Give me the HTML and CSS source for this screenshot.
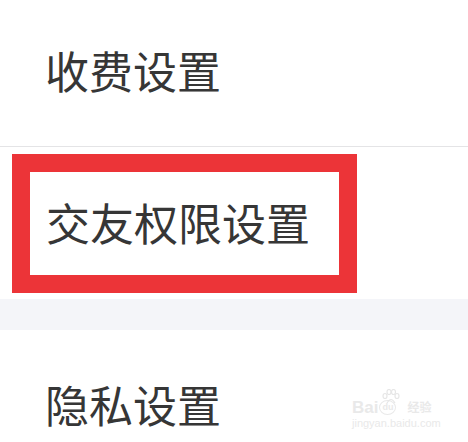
FILE: index.html
```html
<!DOCTYPE html>
<html>
<head>
  <title>设置</title>
  <link rel="stylesheet" href="styles.css">
</head>
<body>
  <div class="row row-first">
    <span class="label">收费设置</span>
  </div>

  <div class="section">
    <div class="highlight">
      <span class="label">交友权限设置</span>
    </div>
  </div>

  <div class="band"></div>

  <div class="row row-last">
    <span class="label">隐私设置</span>
  </div>

  <div class="watermark">
    <svg class="paw" width="18" height="15" viewBox="0 0 18 15">
      <ellipse cx="3" cy="7" rx="2" ry="2.5" fill="none" stroke="#e6e6e6" stroke-width="1.2"/>
      <ellipse cx="7" cy="3" rx="2" ry="2.5" fill="none" stroke="#e6e6e6" stroke-width="1.2"/>
      <ellipse cx="11.5" cy="3" rx="2" ry="2.5" fill="none" stroke="#e6e6e6" stroke-width="1.2"/>
      <ellipse cx="15" cy="7" rx="2" ry="2.5" fill="none" stroke="#e6e6e6" stroke-width="1.2"/>
      <path d="M5 14 Q9 7 13 14" fill="none" stroke="#e6e6e6" stroke-width="1.2"/>
    </svg>
    <div class="wm-logo">
      <span class="wm-bai">Bai</span>
      <span class="wm-du">du</span>
      <span class="wm-jy">经验</span>
    </div>
    <div class="wm-url">jingyan.baidu.com</div>
  </div>
</body>
</html>
```

FILE: styles.css
```css
body {
  margin: 0;
  background-color: #ffffff;
  font-family: "Noto Sans CJK SC", "Noto Sans", sans-serif;
  color: #363636;
  position: relative;
  width: 468px;
  height: 442px;
  overflow: hidden;
}

.label {
  font-size: 44px;
  line-height: 1;
  white-space: nowrap;
}

.row {
  display: flex;
  align-items: center;
  padding-left: 45px;
}

.row-first {
  height: 140px;
  padding-bottom: 6px;
  border-bottom: 1px solid #e4e4e6;
}

.section {
  padding: 7px 0 6px 12px;
}

.highlight {
  box-sizing: border-box;
  width: 345px;
  height: 139px;
  border: 18px solid #ec3438;
  display: flex;
  align-items: center;
  padding-left: 16px;
  padding-bottom: 4px;
}

.band {
  height: 31px;
  background-color: #f4f5f9;
}

.row-last {
  box-sizing: border-box;
  height: 113px;
  align-items: flex-start;
  padding-top: 52px;
}

.watermark {
  position: absolute;
  left: 352px;
  top: 389px;
  width: 100px;
  color: #e9e9e9;
  font-family: "Liberation Sans", Arial, sans-serif;
}

.paw {
  position: absolute;
  left: 30px;
  top: 0;
}

.wm-logo {
  display: flex;
  align-items: center;
  gap: 1px;
  padding-top: 10px;
  height: 16px;
}

.wm-bai {
  font-size: 17px;
  font-weight: bold;
  line-height: 1;
}

.wm-du {
  font-size: 9px;
  font-weight: bold;
  line-height: 1;
  border: 1.5px solid #e9e9e9;
  border-radius: 50%;
  padding: 2px 2px;
}

.wm-jy {
  font-family: "Noto Sans CJK SC", sans-serif;
  font-size: 12px;
  font-weight: bold;
  line-height: 1;
  margin-left: 10px;
}

.wm-url {
  font-size: 11px;
  line-height: 1;
  margin-top: 3px;
}
```
